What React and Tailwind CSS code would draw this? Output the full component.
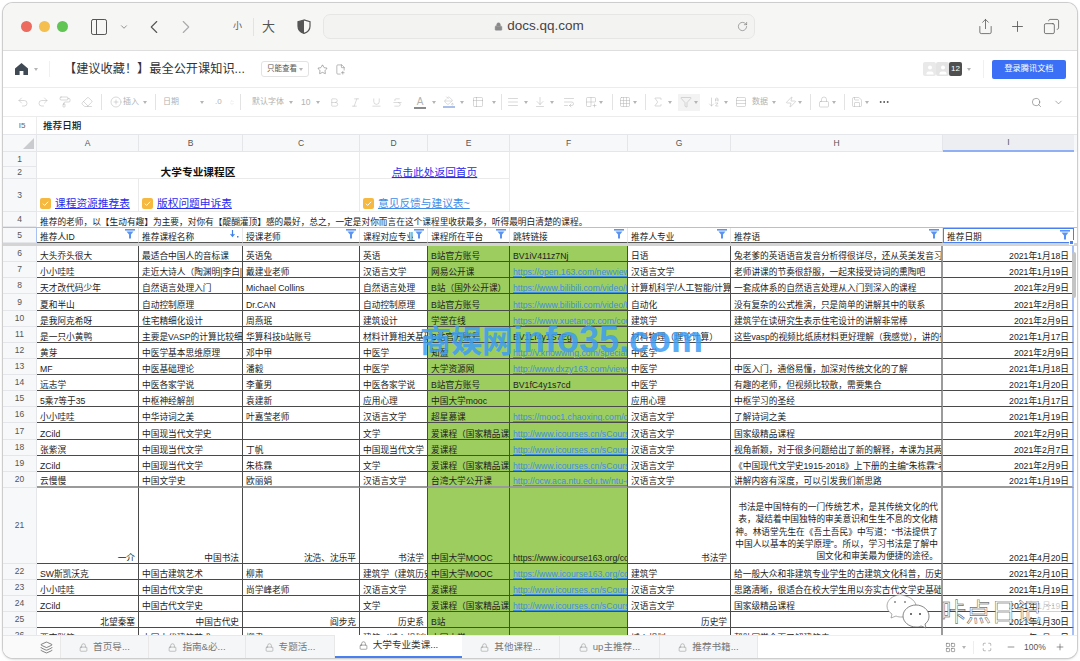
import React from 'react';
import clsx from 'clsx';
import {
  PanelLeft, ChevronDown, ChevronLeft, ChevronRight, Lock, RotateCw, Share, Plus, Copy, Star, FilePlus2,
  Undo2, Redo2, PaintRoller, Eraser, CirclePlus, ChevronsUpDown, Bold, Italic, Underline, Strikethrough,
  PaintBucket, Table2, AlignJustify, ArrowDownToLine, WrapText, Grid2x2Plus, Grid3x3, Sigma, Funnel,
  ArrowDownAZ, Rows3, Zap, Save, Ellipsis, Search, Layers, Minus, Maximize, LayoutGrid, User,
} from 'lucide-react';

const COLS = 'grid-cols-[34px_102px_104px_117px_68px_82px_118px_103px_212px_131px]';

// 每行: 行号, A..I 列
const rows = [
  [6, '大头乔头很大', '最适合中国人的音标课', '英语兔', '英语', 'B站官方账号', 'BV1iV411z7Nj', '日语', '兔老爹的英语语音发音分析得很详尽，还从英美发音习惯上讲', '2021年1月18日'],
  [7, '小小哇哇', '走近大诗人（陶渊明|李白|杜甫）', '戴建业老师', '汉语言文学', '网易公开课', 'https://open.163.com/newview/movie', '汉语言文学', '老师讲课的节奏很舒服，一起来接受诗词的熏陶吧', '2021年1月19日'],
  [8, '天才改代码少年', '自然语言处理入门', 'Michael Collins', '自然语言处理', 'B站（国外公开课）', 'https://www.bilibili.com/video/BV1', '计算机科学/人工智能/计算机', '一套成体系的自然语言处理从入门到深入的课程', '2021年2月9日'],
  [9, '夏和半山', '自动控制原理', 'Dr.CAN', '自动控制原理', 'B站官方账号', 'https://www.bilibili.com/video/BV1', '自动化', '没有复杂的公式推演，只是简单的讲解其中的联系', '2021年2月8日'],
  [10, '是我阿克希呀', '住宅精细化设计', '周燕珉', '建筑设计', '学堂在线', 'https://www.xuetangx.com/course/', '建筑学', '建筑学在读研究生表示住宅设计的讲解非常棒', '2021年2月9日'],
  [11, '是一只小黄鸭', '主要是VASP的计算比较细致', '华算科技b站账号', '材料计算相关基础', 'B站官方账号', 'BV1Lf4y1S7Eg', '材料物理（理论计算）', '这些vasp的视频比纸质材料更好理解（我感觉），讲的很细致', '2021年1月17日'],
  [12, '黄芽', '中医学基本思维原理', '邓中甲', '中医学', '知盈', 'http://v.knowwing.com/special/de', '中医学', '', '2021年2月9日'],
  [13, 'MF', '中医基础理论', '潘毅', '中医学', '大学资源网', 'http://www.dxzy163.com/view/index', '中医学', '中医入门，通俗易懂，加深对传统文化的了解', '2021年1月18日'],
  [14, '远志学', '中医各家学说', '李董男', '中医各家学说', 'B站官方账号', 'BV1fC4y1s7cd', '中医学', '有趣的老师，但视频比较散，需要集合', '2021年1月20日'],
  [15, '5乘7等于35', '中枢神经解剖', '袁建新', '应用心理', '中国大学mooc', '', '应用心理', '中枢学习的圣经', '2021年1月17日'],
  [16, '小小哇哇', '中华诗词之美', '叶嘉莹老师', '汉语言文学', '超星慕课', 'https://mooc1.chaoxing.com/course', '汉语言文学', '了解诗词之美', '2021年1月19日'],
  [17, 'ZCild', '中国现当代文学史', '', '文学', '爱课程（国家精品课程）', 'http://www.icourses.cn/sCourse/co', '汉语言文学', '国家级精品课程', '2021年2月9日'],
  [18, '张紫溟', '中国现当代文学', '丁帆', '中国现当代文学', '爱课程', 'http://www.icourses.cn/sCourse/co', '汉语言文学', '视角新颖，对于很多问题给出了新的解释，本课为其两位老师', '2021年2月7日'],
  [19, 'ZCild', '中国现当代文学', '朱栋霖', '文学', '爱课程（国家精品课程）', 'http://www.icourses.cn/sCourse/co', '汉语言文学', '《中国现代文学史1915-2018》上下册的主编“朱栋霖”老师', '2021年2月9日'],
  [20, '云慢慢', '中国文学史', '欧丽娟', '汉语言文学', '台湾大学公开课', 'http://ocw.aca.ntu.edu.tw/ntu-ocw/', '汉语言文学', '讲解内容有深度，可以引发我们新思路', '2021年1月19日'],
];

const rowsAfter = [
  [22, 'SW斯凯沃克', '中国古建筑艺术', '柳肃', '建筑学（建筑历史）', '中国大学MOOC', 'https://www.icourse163.org/course', '建筑学', '给一般大众和非建筑专业学生的古建筑文化科普，历史背景', '2021年2月10日'],
  [23, '小小哇哇', '中国古代文学史', '尚学峰老师', '汉语言文学', '爱课程', 'http://www.icourses.cn/sCourse/co', '汉语言文学', '思路清晰，很适合在校大学生用以夯实古代文学史基础的课程', '2021年1月19日'],
  [24, 'ZCild', '中国古代文学史', '', '文学', '爱课程（国家精品课程）', 'http://www.icourses.cn/sCourse/co', '汉语言文学', '国家级精品课程', '2021年1月19日'],
];

const filterCols = ['推荐人ID', '推荐课程名称', '授课老师', '课程对应专业', '课程所在平台', '跳转链接', '推荐人专业', '推荐语'];

const tabs = [
  ['首页导...', 'w-[88px]'],
  ['指南&必...', 'w-[97px]'],
  ['专题活...', 'w-[89px]'],
  ['大学专业类课...', 'w-[127px]', true],
  ['其他课程...', 'w-[98px]'],
  ['up主推荐...', 'w-[100px]'],
  ['推荐书籍...', 'w-[98px]'],
];

const Caret = ({ className }) => (
  <span className={clsx('w-0 h-0 shrink-0 border-x-[2.5px] border-x-transparent border-t-[3px] border-t-[#b5b5b5]', className)} />
);

const Divider = ({ className }) => <span className={clsx('w-px h-[16px] shrink-0 bg-[#e3e3e3]', className)} />;

const FilterIcon = () => (
  <svg width="10" height="10" viewBox="0 0 10 10" className="shrink-0">
    <rect x="0" y="0" width="10" height="1.6" fill="#5b93f0" />
    <path d="M1.5 2.6h7L6 5.6V9.6H4V5.6z" fill="#5b93f0" />
  </svg>
);

const CheckMark = () => (
  <span className="w-[11px] h-[11px] rounded-[2px] bg-[#f5b942] flex items-center justify-center shrink-0 mr-[4px] mb-[1px]">
    <svg width="7" height="7" viewBox="0 0 8 8"><path d="M1 4.2l2 2L7 2" fill="none" stroke="#fff" strokeWidth="1.1" /></svg>
  </span>
);

const RowNo = ({ children, className }) => (
  <div className={clsx('bg-[#f7f8fa] border-r border-b border-[#e4e6e9] text-[#555] text-[8.5px] flex items-center justify-center', className)}>
    {children}
  </div>
);

const Cell = ({ children, right, green, col, plain, last }) => {
  const isLink = !plain && typeof children === 'string' && children.startsWith('http');
  return (
    <div
      className={clsx(
        'flex items-end overflow-hidden whitespace-nowrap text-[8.7px] leading-[10px] px-[3px] min-w-0',
        last ? 'border-b-2 border-b-[#9a9a9a]' : 'border-b border-b-[#4a4a4a]',
        col === 8 ? 'border-r-2 border-r-[#9b9b9b]' : col === 9 ? 'border-r-2 border-r-[#a8c0f5]' : 'border-r border-r-[#4a4a4a]',
        green ? 'bg-[#9ccd5e]' : 'bg-white',
        right ? 'justify-end' : 'justify-start',
        isLink ? 'text-[#3f8de0] underline' : 'text-[#222]'
      )}
    >
      <span>{children}</span>
    </div>
  );
};

const DataRow = ({ row, right, last, className = 'h-[16.13px]' }) => (
  <div className={clsx('grid', COLS, className)}>
    <RowNo>{row[0]}</RowNo>
    {row.slice(1).map((text, i) => (
      <Cell key={i} col={i + 1} last={last} green={i === 4 || i === 5} right={i === 8 || (right && i !== 4 && i !== 5)}>
        {text}
      </Cell>
    ))}
  </div>
);

const App = () => (
  <div className="w-[1080px] h-[661px] bg-white overflow-hidden pt-[3px] pl-[3px] font-['Liberation_Sans','Noto_Sans_CJK_SC',sans-serif]">
    <div className="relative w-[1074px] h-[655px] rounded-[10px] overflow-hidden bg-white flex flex-col shadow-[0_0_0_1px_#cdcdcd,0_1px_3px_rgba(0,0,0,0.25)]">
      {/* Safari 标题栏 */}
      <div className="h-[48px] shrink-0 bg-[#f6f6f5] border-b border-[#dedede] flex items-center text-[#555]">
        <span className="ml-[18px] w-[11px] h-[11px] rounded-full bg-[#ec6a5e]" />
        <span className="ml-[7px] w-[11px] h-[11px] rounded-full bg-[#f4bf4f]" />
        <span className="ml-[7px] w-[11px] h-[11px] rounded-full bg-[#61c554]" />
        <PanelLeft size={20} strokeWidth={1.2} className="ml-[21px]" />
        <ChevronDown size={10} strokeWidth={1.5} className="ml-[10px]" />
        <ChevronLeft size={22} strokeWidth={1.2} className="ml-[14px]" />
        <ChevronRight size={22} strokeWidth={1.2} className="ml-[10px] text-[#aaa]" />
        <span className="ml-[36px] text-[9px] w-[10px]">小</span>
        <span className="ml-[10px] w-px h-[18px] bg-[#e3e3e3]" />
        <span className="ml-[8px] text-[13px] w-[14px]">大</span>
        <svg width="14" height="15" viewBox="0 0 14 15" className="ml-[21px]">
          <path d="M7 1L1 2.8v4.4C1 11 4 13.4 7 14.4c3-1 6-3.4 6-7.2V2.8z" fill="none" stroke="#555" strokeWidth="1.2" />
          <path d="M7 1v13.4C4 13.4 1 11 1 7.2V2.8z" fill="#555" />
        </svg>
        <div className="ml-[12px] w-[432px] h-[25px] rounded-[7px] bg-[#f3f3f2] border border-[#e6e6e5] flex items-center justify-center relative">
          <Lock size={9} fill="#8a8a8a" strokeWidth={1.2} className="text-[#8a8a8a] mr-[4px]" />
          <span className="text-[13.5px] text-[#444]">docs.qq.com</span>
          <RotateCw size={11} strokeWidth={1.2} className="absolute right-[6px] top-[6px] text-[#666]" />
        </div>
        <Share size={17} strokeWidth={1.1} className="ml-[222px]" />
        <Plus size={17} strokeWidth={1.2} className="ml-[15px]" />
        <Copy size={17} strokeWidth={1.1} className="ml-[17px] -scale-x-100" />
      </div>

      {/* 文档标题栏 */}
      <div className="h-[37px] shrink-0 border-b border-[#ececec] flex items-center">
        <svg width="13" height="12" viewBox="0 0 13 12" className="ml-[12px]">
          <path d="M6.5 0L0 5.4V12h4.6V8h3.8v4H13V5.4z" fill="#3f4a55" />
        </svg>
        <Caret className="ml-[6px]" />
        <span className="ml-[11px] w-px h-[16px] bg-[#f0f0f0]" />
        <span className="ml-[14px] w-[183px] text-[12.2px] text-[#333] whitespace-nowrap">【建议收藏！】最全公开课知识...</span>
        <div className="ml-[14px] w-[48px] h-[16px] rounded-[3px] border border-[#e3e3e3] flex items-center justify-center text-[7.5px] text-[#555]">
          只能查看
          <Caret className="ml-[2px]" />
        </div>
        <Star size={11} strokeWidth={1.1} className="ml-[8px] text-[#666]" />
        <FilePlus2 size={11} strokeWidth={1.1} className="ml-[7px] text-[#777]" />
        <div className="ml-auto flex items-center">
          <span className="w-[13px] h-[14px] bg-[#e9e9e9] rounded-[2px] flex items-end justify-center overflow-hidden text-white">
            <User size={12} fill="#fff" strokeWidth={0} />
          </span>
          <span className="w-[13px] h-[14px] bg-[#e4e4e4] rounded-[2px] flex items-end justify-center overflow-hidden text-white">
            <User size={12} fill="#fff" strokeWidth={0} />
          </span>
          <span className="w-[13px] h-[14px] bg-[#4f4f4f] rounded-[2px] text-white text-[8px] flex items-center justify-center">12</span>
          <Caret className="ml-[5px] border-t-[#666]" />
          <span className="ml-[12px] w-px h-[18px] bg-[#f0f0f0]" />
          <div className="ml-[8px] mr-[11px] w-[74px] h-[19px] rounded-[2px] bg-[#3b6ff5] text-white text-[8.2px] flex items-center justify-center">登录腾讯文档</div>
        </div>
      </div>

      {/* 工具栏 */}
      <div className="h-[29px] shrink-0 border-b border-[#ececec] flex items-center pl-[14px] text-[#b2b2b2] text-[8px] whitespace-nowrap">
        <Undo2 size={12} strokeWidth={1} />
        <Redo2 size={12} strokeWidth={1} className="ml-[8px]" />
        <PaintRoller size={12} strokeWidth={1} className="ml-[10px]" />
        <Eraser size={12} strokeWidth={1} className="ml-[10px]" />
        <Divider className="ml-[8px]" />
        <CirclePlus size={12} strokeWidth={1} className="ml-[8px]" />
        <span className="ml-[1px] w-[16px]">插入</span>
        <Caret className="ml-[4px]" />
        <Divider className="ml-[8px]" />
        <span className="ml-[7px] w-[16px]">日期</span>
        <Caret className="ml-[21px]" />
        <span className="ml-[11px] w-[10px]">.0</span>
        <ChevronsUpDown size={9} strokeWidth={1} className="ml-[4px] w-[6px]" />
        <Divider className="ml-[5px]" />
        <span className="ml-[11px] w-[34px]">默认字体</span>
        <Caret className="ml-[3px]" />
        <span className="ml-[8px] w-[12px] text-[8.5px]">10</span>
        <Caret className="ml-[3px]" />
        <Bold size={11} strokeWidth={1} className="ml-[9px]" />
        <Italic size={11} strokeWidth={1} className="ml-[10px]" />
        <Underline size={11} strokeWidth={1} className="ml-[10px]" />
        <Strikethrough size={11} strokeWidth={1} className="ml-[10px]" />
        <span className="ml-[11px] w-[12px] text-center text-[10px] leading-[11px] border-b-2 border-[#8a8a8a]">A</span>
        <Caret className="ml-[6px]" />
        <span className="ml-[7px] w-[12px] border-b-2 border-[#a9bfe9] flex justify-center">
          <PaintBucket size={10} strokeWidth={1} />
        </span>
        <Caret className="ml-[5px]" />
        <Table2 size={12} strokeWidth={1} className="ml-[8px]" />
        <Caret className="ml-[8px]" />
        <Divider className="ml-[5px]" />
        <AlignJustify size={12} strokeWidth={1} className="ml-[5px]" />
        <Caret className="ml-[5px]" />
        <ArrowDownToLine size={12} strokeWidth={1} className="ml-[6px]" />
        <Caret className="ml-[4px]" />
        <WrapText size={12} strokeWidth={1} className="ml-[9px]" />
        <Grid2x2Plus size={12} strokeWidth={1} className="ml-[10px]" />
        <Caret className="ml-[2px]" />
        <Divider className="ml-[9px]" />
        <Grid3x3 size={12} strokeWidth={1} className="ml-[6px]" />
        <Caret className="ml-[2px]" />
        <Divider className="ml-[8px]" />
        <Sigma size={12} strokeWidth={1} className="ml-[6px]" />
        <Caret className="ml-[4px]" />
        <span className="ml-[6px] w-[22px] h-[17px] bg-[#f3f3f3] flex items-center justify-center">
          <Funnel size={12} strokeWidth={1} />
          <Caret className="ml-[2px]" />
        </span>
        <ArrowDownAZ size={12} strokeWidth={1} className="ml-[8px]" />
        <Caret className="ml-[4px]" />
        <Rows3 size={12} strokeWidth={1} className="ml-[7px]" />
        <span className="ml-[5px] w-[16px]">数据</span>
        <Caret className="ml-[4px]" />
        <Zap size={12} strokeWidth={1} className="ml-[9px]" />
        <Caret className="ml-[1px]" />
        <Divider className="ml-[8px]" />
        <Lock size={12} strokeWidth={1} className="ml-[7px]" />
        <Caret className="ml-[2px]" />
        <Divider className="ml-[8px]" />
        <Save size={12} strokeWidth={1} className="ml-[6px]" />
        <Caret className="ml-[2px]" />
        <Ellipsis size={12} strokeWidth={1.5} className="ml-[9px] text-[#333]" />
        <Search size={11} strokeWidth={1.2} className="ml-auto text-[#666]" />
        <ChevronDown size={11} strokeWidth={1.2} className="ml-[11px] mr-[13px] text-[#666]" />
      </div>

      {/* 编辑栏 */}
      <div className="h-[18px] shrink-0 flex items-center border-b border-[#e4e6e9]">
        <span className="w-[33px] text-center text-[8px] text-[#666] pl-[5px]">I5</span>
        <span className="w-px h-full bg-[#ececec]" />
        <span className="ml-[6px] pt-[2px] text-[9.6px] text-[#222] font-medium">推荐日期</span>
      </div>

      {/* 表格 */}
      <div className="relative h-[500px] shrink-0 overflow-hidden">
        <div className={clsx('grid h-[17px] bg-[#f7f8fa] text-[8.5px] text-[#555]', COLS)}>
          <div className="border-r border-b border-[#e4e6e9] flex items-end justify-end pr-[2px] pb-[2px]">
            <svg width="11" height="11" viewBox="0 0 11 11"><path d="M11 0v11H0z" fill="#c9cbce" /></svg>
          </div>
          {['A', 'B', 'C', 'D', 'E', 'F', 'G', 'H'].map((c) => (
            <div key={c} className="border-r border-b border-[#e4e6e9] flex items-center justify-center">{c}</div>
          ))}
          <div className="bg-[#eceef1] border-b-2 border-[#8fb0f5] flex items-center justify-center">I</div>
        </div>

        {/* 第 1-4 行的合并单元格 */}
        <div className={clsx('grid grid-rows-[15px_12px_33px_15px]', COLS)}>
          <RowNo>1</RowNo>
          <div className="col-span-3 row-span-2 border-r border-b border-[#eaeaea] flex items-end justify-center text-[10.7px] font-bold text-[#111] leading-[12px]">大学专业课程区</div>
          <div className="col-span-2 row-span-2 border-r border-b border-[#eaeaea] flex items-end justify-center text-[10.7px] text-[#2b2bee] underline leading-[12px]">点击此处返回首页</div>
          <div className="col-span-3 row-span-3 border-b border-[#eaeaea]" />
          <div className="row-span-3 border-b border-[#eaeaea]" />
          <RowNo>2</RowNo>
          <RowNo>3</RowNo>
          <div className="border-r border-b border-[#eaeaea] flex items-end pl-[3px] text-[10.7px] text-[#2b2bee] leading-[14px] pb-[1px]">
            <CheckMark /><span className="underline whitespace-nowrap">课程资源推荐表</span>
          </div>
          <div className="col-span-2 border-r border-b border-[#eaeaea] flex items-end pl-[3px] text-[10.7px] text-[#2b2bee] leading-[14px] pb-[1px]">
            <CheckMark /><span className="underline whitespace-nowrap">版权问题申诉表</span>
          </div>
          <div className="col-span-2 border-r border-b border-[#eaeaea] flex items-end pl-[3px] text-[10.7px] text-[#3f8de8] leading-[14px] pb-[1px]">
            <CheckMark /><span className="underline whitespace-nowrap">意见反馈与建议表~</span>
          </div>
          <RowNo>4</RowNo>
          <div className="col-span-9 flex items-end pl-[3px] text-[8.7px] leading-[10px] text-[#222] whitespace-nowrap">
            推荐的老师，以【生动有趣】为主要，对你有【醍醐灌顶】感的最好，总之，一定是对你而言在这个课程里收获最多，听得最明白清楚的课程。
          </div>
        </div>

        {/* 第 5 行: 筛选表头 */}
        <div className={clsx('grid h-[16px] border-t border-[#a9c0f5]', COLS)}>
          <RowNo className="border-r-[#a9c0f5]">5</RowNo>
          {filterCols.map((name, i) => (
            <div key={name} className="relative border-r border-r-[#e8e8e8] border-b border-b-[#555] flex items-end pl-[3px] text-[8.7px] leading-[10px] text-[#222] overflow-hidden whitespace-nowrap">
              {name}
              <span className="absolute right-[3px] top-[1px] bg-white pl-[1px]">
                {i === 1 ? (
                  <svg width="10" height="10" viewBox="0 0 10 10">
                    <path d="M3.5 1v6M1.6 5L3.5 7.4 5.4 5" fill="none" stroke="#3f7fe8" strokeWidth="1.2" />
                    <rect x="8" y="7" width="1.5" height="1.5" fill="#3f7fe8" />
                  </svg>
                ) : (
                  <FilterIcon />
                )}
              </span>
            </div>
          ))}
          <div className="relative border border-[#4a7ff0] flex items-end pl-[3px] text-[8.7px] leading-[10px] text-[#222]">
            推荐日期
            <span className="absolute right-[3px] top-[1px]"><FilterIcon /></span>
            <span className="absolute -right-px -bottom-[3px] w-[5px] h-[5px] bg-[#4a7ff0] border border-white" />
          </div>
        </div>

        {/* 冻结线 */}
        <div className="h-[3px] bg-[#d4d4d4]" />

        {rows.map((row) => <DataRow key={row[0]} row={row} last={row[0] === 20} />)}

        {/* 第 21 行 */}
        <div className={clsx('grid h-[76px]', COLS)}>
          <RowNo>21</RowNo>
          <Cell col={1} right>一介</Cell>
          <Cell col={2} right>中国书法</Cell>
          <Cell col={3} right>沈浩、沈乐平</Cell>
          <Cell col={4} right>书法学</Cell>
          <Cell col={5} green>中国大学MOOC</Cell>
          <Cell col={6} green plain>https://www.icourse163.org/course</Cell>
          <Cell col={7} right>书法学</Cell>
          <div className="border-b border-[#4a4a4a] border-r-2 border-r-[#9b9b9b] flex flex-col justify-end text-right text-[8.7px] leading-[12.4px] pr-[3px] text-[#222] whitespace-nowrap overflow-hidden">
            <span>书法是中国特有的一门传统艺术，是其传统文化的代</span>
            <span>表，凝结着中国独特的审美意识和生生不息的文化精</span>
            <span>神。林语堂先生在《吾土吾民》中写道：“书法提供了</span>
            <span>中国人以基本的美学原理”。所以，学习书法是了解中</span>
            <span>国文化和审美最为便捷的途径。</span>
          </div>
          <Cell col={9} right>2021年4月20日</Cell>
        </div>

        {rowsAfter.map((row) => <DataRow key={row[0]} row={row} className="h-[16px]" />)}
        <DataRow row={[25, '北望秦塞', '中国古代史', '阎步克', '历史系', 'B站', '', '历史学', '', '2021年1月30日']} right className="h-[16px]" />
        <DataRow row={[26, '西南联第', '中国古代建筑艺术', '柳肃', '建筑（城乡规划）', '中国大学MOOC', '', '城乡规划', '帮助同学全面了解建筑史', '2021年1月19日']} />

        {/* 滚动条 */}
        <span className="absolute right-[1px] top-[117px] w-[4px] h-[46px] rounded-full bg-[#c4c4c4]" />

        {/* 转载水印 */}
        <div className="absolute left-[417px] top-[188px] flex items-baseline font-bold text-[#3d9df5]/85 whitespace-nowrap pointer-events-none">
          <span className="text-[31px] leading-[34px]">商娱网</span>
          <span className="text-[36px] leading-[34px]">info35.com</span>
        </div>

        {/* 公众号水印 */}
        <span className="absolute left-[1036px] top-[462px] w-[22px] h-[20px] rounded-[3px] bg-white/75 text-[#888] text-[9px] leading-[16px] text-center pointer-events-none">···</span>
        <div className="absolute left-[883px] top-[459px] flex items-center pointer-events-none">
          <svg width="44" height="36" viewBox="0 0 44 36" className="shrink-0">
            <path d="M14 1C7 1 1 6 1 12c0 4 2 6 5 8l-1 4 5-2c2 1 4 1 6 1 6 0 14-5 14-11S21 1 14 1z" fill="#fff" stroke="#777" strokeWidth="0.6" />
            <circle cx="9" cy="8" r="1" fill="#888" />
            <circle cx="19" cy="8" r="1" fill="#888" />
            <path d="M30 11c-7 0-13 5-13 11s6 11 13 11c2 0 3 0 5-1l5 2-1-4c3-2 4-5 4-8 0-6-6-11-13-11z" fill="#fff" stroke="#555" strokeWidth="0.7" />
            <circle cx="25" cy="20" r="1" fill="#444" />
            <circle cx="34" cy="20" r="1" fill="#444" />
          </svg>
          <span className="ml-[11px] text-[25px] leading-[30px] text-white [-webkit-text-stroke:0.4px_#333] whitespace-nowrap">咔点日记</span>
        </div>
      </div>

      {/* 底部工作表标签 */}
      <div className="flex-1 flex items-stretch bg-white text-[9.6px] text-[#777] whitespace-nowrap">
        <div className="w-[58px] bg-[#fafafa] border-r border-t border-[#e8e8e8] flex items-center justify-end pr-[7px]">
          <Layers size={13} strokeWidth={1.2} className="text-[#444]" />
        </div>
        {tabs.map(([name, width, active]) => (
          <div
            key={name}
            className={clsx(
              'flex items-center justify-center',
              width,
              active ? 'bg-white text-[#333] border-b-2 border-[#4a7ff0]' : 'bg-[#f5f6f7] border-r border-t border-[#e8e8e8]'
            )}
          >
            <Lock size={9} strokeWidth={1.1} className="mr-[5px]" />
            {name}
          </div>
        ))}
        <div className="flex-1 flex items-center border-t border-[#eeeeee] text-[#555]">
          <LayoutGrid size={11} strokeWidth={1.1} className="ml-[187px]" />
          <Caret className="ml-[6px] border-t-[#666]" />
          <span className="ml-[7px] w-px h-[13px] bg-[#eeeeee]" />
          <Maximize size={10} strokeWidth={1} className="ml-[8px]" />
          <Minus size={10} strokeWidth={1.5} className="ml-[14px]" />
          <span className="ml-[8px] text-[8.5px]">100%</span>
          <Plus size={10} strokeWidth={1.5} className="ml-[9px]" />
        </div>
      </div>
    </div>
  </div>
);

export default App;
